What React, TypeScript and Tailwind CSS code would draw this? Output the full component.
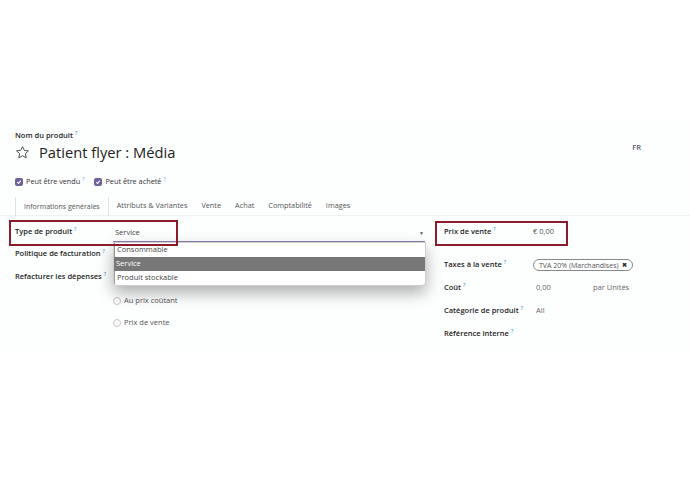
import React from "react";

const Q = () => (
  <span className="ml-[2px] text-[5px] leading-none text-[#4a9bd6] relative top-[-1px]">?</span>
);

const Label = ({ children }: { children: React.ReactNode }) => (
  <span className="inline-flex items-start font-semibold text-[#1f1f1f] text-[7.5px] leading-none whitespace-nowrap">
    {children}
    <Q />
  </span>
);

const Check = ({ label }: { label: string }) => (
  <div className="flex items-center gap-[3px]">
    <span className="w-[8px] h-[8px] rounded-[2px] bg-[#6e6199] flex items-center justify-center">
      <svg width="6" height="6" viewBox="0 0 10 10">
        <path d="M2 5.2 L4.2 7.3 L8 2.8" stroke="white" strokeWidth="1.8" fill="none" />
      </svg>
    </span>
    <span className="inline-flex items-start text-[7.3px] leading-none text-[#333] whitespace-nowrap">
      {label}
      <Q />
    </span>
  </div>
);

const Radio = ({ label }: { label: string }) => (
  <div className="flex items-center gap-[3px] h-[22px]">
    <span className="w-[8px] h-[8px] rounded-full border border-[#c8c8c8] bg-white" />
    <span className="text-[7.5px] leading-none text-[#555]">{label}</span>
  </div>
);

export default function App() {
  return (
    <div
      className="w-[690px] h-[487px] bg-white relative overflow-hidden"
      style={{ fontFamily: '"Open Sans", "Noto Sans", sans-serif' }}
    >
      <div className="h-[118px]" />
      <div className="bg-[#fdfefe] h-[237px] relative">
        {/* header */}
        <div className="px-[15px] pt-[11px]">
          <div className="h-[10px] flex items-center mt-[2px]">
            <Label>Nom du produit</Label>
          </div>
          <div className="flex items-center justify-between h-[20px] mt-[1px]">
            <div className="flex items-center gap-[9px]">
              <svg width="15" height="15" viewBox="0 0 24 24" fill="none" stroke="#444" strokeWidth="1.5" strokeLinejoin="round">
                <path d="M12 2.5 L14.9 8.6 L21.5 9.4 L16.6 13.9 L17.9 20.5 L12 17.2 L6.1 20.5 L7.4 13.9 L2.5 9.4 L9.1 8.6 Z" />
              </svg>
              <span className="text-[14.7px] text-[#222] leading-none">Patient flyer : Média</span>
            </div>
            <span className="text-[7.5px] leading-none font-semibold text-[#555a6e] mr-[34px] -mt-[9px]">FR</span>
          </div>
          <div className="flex items-center gap-[10px] h-[14px] mt-[13px]">
            <Check label="Peut être vendu" />
            <Check label="Peut être acheté" />
          </div>
        </div>
        {/* tabs */}
        <div className="flex h-[19px] mt-[8px] pl-[15px] border-b border-[#f0f0f0]">
          <div className="px-[8px] flex items-center border-l border-r border-[#e2e2e2] -mb-px text-[7px] leading-none text-[#555]">
            Informations générales
          </div>
          <div className="flex items-center gap-[14px] pl-[8px] text-[7.3px] leading-none text-[#555]">
            <span>Attributs &amp; Variantes</span>
            <span>Vente</span>
            <span>Achat</span>
            <span>Comptabilité</span>
            <span>Images</span>
          </div>
        </div>
        {/* form */}
        <div className="flex px-[15px] pt-[5px]">
          <div className="w-[410px] flex flex-col">
            <div className="flex items-center h-[22px]">
              <div className="w-[98px] flex">
                <Label>Type de produit</Label>
              </div>
              <div className="flex-1 flex items-center justify-between h-[16px] border-b border-[#8f7fb3] mt-[3px] pr-[1px]">
                <span className="text-[7.5px] leading-none text-[#444] pl-[2px]">Service</span>
                <span className="text-[5px] leading-none text-[#555]">▼</span>
              </div>
            </div>
            <div className="flex items-center h-[22px]">
              <Label>Politique de facturation</Label>
            </div>
            <div className="flex items-center h-[24px]">
              <Label>Refacturer les dépenses</Label>
            </div>
            <div className="pl-[98px] pt-[1px]">
              <Radio label="Au prix coûtant" />
              <Radio label="Prix de vente" />
            </div>
          </div>
          <div className="ml-[19px] flex-1 flex flex-col">
            <div className="flex items-center h-[22px]">
              <div className="w-[89px] flex">
                <Label>Prix de vente</Label>
              </div>
              <span className="text-[7.5px] leading-none text-[#555]">€ 0,00</span>
            </div>
            <div className="flex items-center h-[22px] mt-[11px]">
              <div className="w-[89px] flex">
                <Label>Taxes à la vente</Label>
              </div>
              <span className="text-[7px] leading-none text-[#555] border border-[#888] rounded-full px-[5px] h-[12px] flex items-center gap-[3px]">
                TVA 20% (Marchandises)
                <span className="text-[6px] font-bold text-[#333]">✖</span>
              </span>
            </div>
            <div className="flex items-center h-[23px]">
              <div className="w-[92px] flex">
                <Label>Coût</Label>
              </div>
              <span className="w-[57px] text-[7.5px] leading-none text-[#666]">0,00</span>
              <span className="text-[7.5px] leading-none text-[#666]">par Unités</span>
            </div>
            <div className="flex items-center h-[23px]">
              <div className="w-[92px] flex">
                <Label>Catégorie de produit</Label>
              </div>
              <span className="text-[7.5px] leading-none text-[#666]">All</span>
            </div>
            <div className="flex items-center h-[23px]">
              <Label>Référence interne</Label>
            </div>
          </div>
        </div>
      </div>

      {/* dropdown overlay */}
      <div className="absolute left-[113px] top-[242px] w-[313px] h-[44px] bg-white border border-[#cfcfcf] rounded-b-[4px] shadow-[0_7px_16px_rgba(0,0,0,0.32)] flex flex-col overflow-hidden">
        <div className="h-[14px] flex items-center pl-[2px] text-[7.5px] leading-none text-[#444] border-l border-[#999]">Consommable</div>
        <div className="h-[14px] flex items-center pl-[2px] text-[7.5px] leading-none text-white bg-[#777777]">Service</div>
        <div className="h-[14px] flex items-center pl-[2px] text-[7.5px] leading-none text-[#444] border-l border-[#999]">Produit stockable</div>
      </div>

      {/* annotation boxes */}
      <div className="absolute left-[9px] top-[220px] w-[169px] h-[26px] border-2 border-[#8a1c2c]" />
      <div className="absolute left-[435px] top-[221px] w-[133px] h-[25px] border-2 border-[#8a1c2c]" />
    </div>
  );
}
